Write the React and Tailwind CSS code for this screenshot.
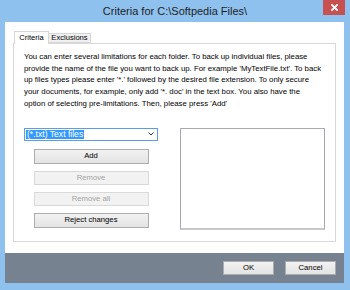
import React from 'react';

const font = { fontFamily: '"Liberation Sans", Arial, sans-serif' };

const Btn = ({ children, disabled, className = '' }) => (
    <button
        type="button"
        disabled={disabled}
        className={`flex items-center justify-center border text-[7.7px] leading-none ${disabled ? 'border-[#d9d9d9] bg-[#f2f2f2] text-[#a3a3a3]' : 'border-[#acacac] bg-gradient-to-b from-[#f2f2f2] to-[#e3e3e3] text-black'} ${className}`}
    >
        {children}
    </button>
);

export default function App() {
    return (
        <div className="w-[350px] h-[290px] bg-[#8fc1ef] flex flex-col" style={font}>
            {/* title bar */}
            <div className="h-[22px] grid grid-cols-[1fr_auto_1fr] items-start">
                <div />
                <div className="text-[11px] leading-none text-[#1e1e1e] pt-[6px] whitespace-nowrap">Criteria for C:\Softpedia Files\</div>
                <div className="flex justify-end pr-[5px]">
                    <div className="w-[22px] h-[15px] bg-[#c75050] flex items-center justify-center">
                        <svg width="7" height="7" viewBox="0 0 7 7">
                            <path d="M1 1 L6 6 M6 1 L1 6" stroke="#fff" strokeWidth="1.8" strokeLinecap="square" />
                        </svg>
                    </div>
                </div>
            </div>

            {/* client */}
            <div className="ml-[5px] mr-[6px] h-[261px] flex flex-col">
                <div className="bg-white h-[231px] pt-[9px] px-[8px] flex flex-col">
                    {/* tabs */}
                    <div className="flex items-end h-[12px] pl-[1px]">
                        <div className="relative z-10 h-[13px] w-[35px] -mb-[1px] bg-white border border-b-0 border-[#d6d6d6] text-[7.6px] leading-none flex items-center justify-center text-black">Criteria</div>
                        <div className="h-[10px] w-[42px] bg-[#f0f0f0] border border-l-0 border-[#d6d6d6] text-[7.6px] leading-none flex items-center justify-center text-black">Exclusions</div>
                    </div>
                    {/* panel */}
                    <div className="h-[199px] border border-[#d9d9d9] bg-white px-[10px] pt-[7px]">
                        <p className="text-[7.8px] leading-[11.7px] text-black whitespace-nowrap">
                            You can enter several limitations for each folder. To back up individual files, please<br />
                            provide the name of the file you want to back up. For example 'MyTextFile.txt'. To back<br />
                            up files types please enter '*.' followed by the desired file extension. To only secure<br />
                            your documents, for example, only add '*. doc' in the text box. You also have the<br />
                            option of selecting pre-limitations. Then, please press 'Add'
                        </p>
                        <div className="mt-[18px] flex gap-[22px]">
                            <div className="w-[134px] flex flex-col items-center">
                                <div className="w-[134px] h-[13px] border border-[#5c9ee6] bg-white flex items-center pl-[1px] pr-[3px]">
                                    <span className="bg-[#3399ff] text-white text-[8.6px] leading-[9px] px-[1px] whitespace-nowrap">(*.txt) Text files</span>
                                    <div className="flex-1" />
                                    <svg width="6" height="4" viewBox="0 0 6 4">
                                        <path d="M0.5 0.5 L3 3 L5.5 0.5" stroke="#333" strokeWidth="1" fill="none" />
                                    </svg>
                                </div>
                                <div className="mt-[8px] flex flex-col gap-[7px] w-[115px]">
                                    <Btn className="h-[15px]">Add</Btn>
                                    <Btn disabled className="h-[14px]">Remove</Btn>
                                    <Btn disabled className="h-[14px]">Remove all</Btn>
                                    <Btn className="h-[15px]">Reject changes</Btn>
                                </div>
                            </div>
                            <div className="w-[145px] h-[102px] border border-[#a8a8b0] border-b-[2px] border-b-[#c8c8cc] bg-white" />
                        </div>
                    </div>
                </div>
                {/* bottom bar */}
                <div className="h-[30px] bg-[#778290] flex justify-end items-start gap-[11px] pt-[8px] pr-[8px]">
                    <Btn className="w-[51px] h-[14px]">OK</Btn>
                    <Btn className="w-[51px] h-[14px]">Cancel</Btn>
                </div>
            </div>
        </div>
    );
}
